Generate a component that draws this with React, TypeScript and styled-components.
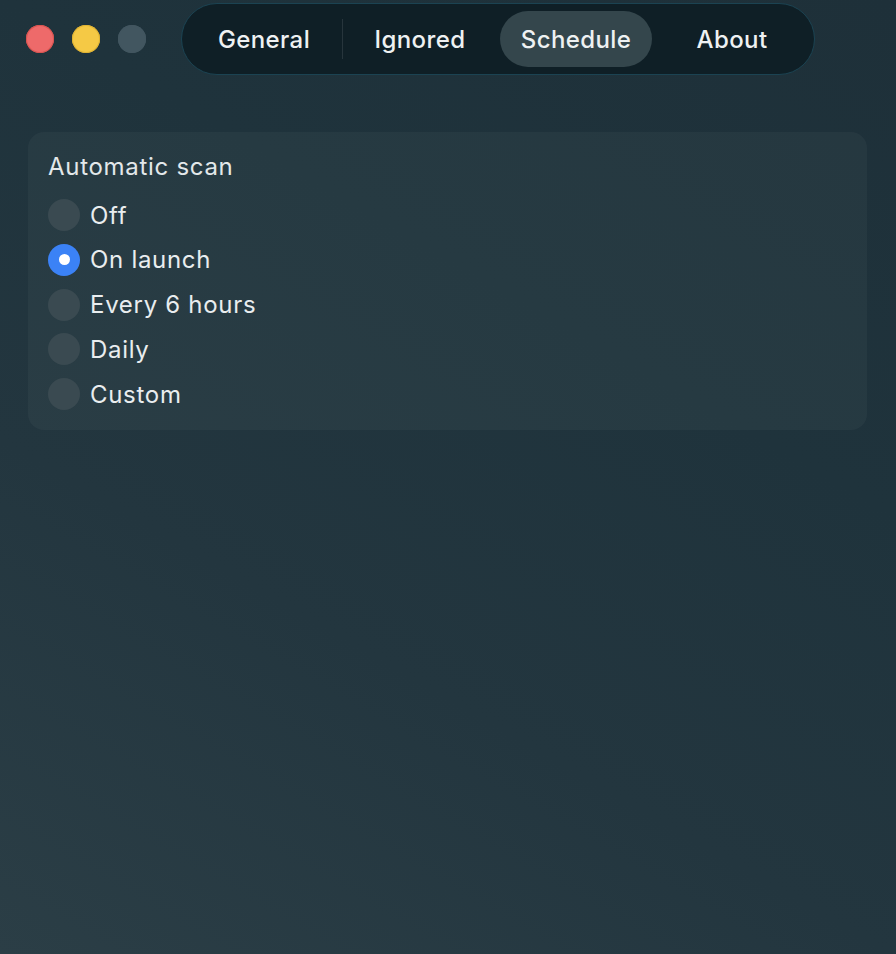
import React from "react";
import styled, { createGlobalStyle } from "styled-components";

const GlobalStyle = createGlobalStyle`
  html, body {
    margin: 0;
    padding: 0;
  }
  body {
    font-family: Inter, "Noto Sans", "Liberation Sans", sans-serif;
    -webkit-font-smoothing: antialiased;
  }
`;

const Window = styled.div`
  width: 896px;
  height: 954px;
  box-sizing: border-box;
  background: linear-gradient(30deg, #2b3e46 0%, #23363f 35%, #1f333c 65%, #1e3039 100%);
  display: flex;
  flex-direction: column;
  overflow: hidden;
`;

const TitleBar = styled.div`
  display: flex;
  align-items: center;
  padding: 3px 0 0 26px;
`;

const Lights = styled.div`
  display: flex;
  gap: 18px;
  margin-right: 35px;
`;

const Light = styled.span<{ $color: string; $edge: string }>`
  width: 28px;
  height: 28px;
  border-radius: 50%;
  background: ${(p) => p.$color};
  box-shadow: inset 0 0 0 1px ${(p) => p.$edge};
`;

const TabBar = styled.nav`
  display: flex;
  align-items: center;
  gap: 4px;
  padding: 6px;
  height: 58px;
  border-radius: 36px;
  background: #0f1f26;
  border: 1px solid #1b4352;
`;

const Tab = styled.div<{ $active?: boolean; $divider?: boolean }>`
  position: relative;
  width: 152px;
  height: 56px;
  border-radius: 28px;
  display: flex;
  align-items: center;
  justify-content: center;
  font-size: 24px;
  font-weight: 500;
  letter-spacing: 0.4px;
  color: #eef1f2;
  background: ${(p) => (p.$active ? "#34464c" : "transparent")};

  &::after {
    content: "";
    display: ${(p) => (p.$divider ? "block" : "none")};
    position: absolute;
    right: -3px;
    top: 8px;
    width: 1px;
    height: 40px;
    background: rgba(255, 255, 255, 0.1);
  }
`;

const Card = styled.section`
  margin: 57px 29px 0 28px;
  padding: 20px 20px 20px;
  border-radius: 16px;
  background: rgba(255, 255, 255, 0.035);
  display: flex;
  flex-direction: column;
`;

const CardTitle = styled.div`
  font-size: 24px;
  line-height: 30px;
  letter-spacing: 0.7px;
  color: #e3e8ea;
  margin-bottom: 17px;
`;

const Options = styled.div`
  display: flex;
  flex-direction: column;
  gap: 12.8px;
`;

const Option = styled.label`
  display: flex;
  align-items: center;
  gap: 10px;
  height: 32px;
  font-size: 24px;
  letter-spacing: 0.7px;
  color: #e9edef;
`;

const Radio = styled.span<{ $checked?: boolean }>`
  width: 32px;
  height: 32px;
  border-radius: 50%;
  background: ${(p) => (p.$checked ? "#3b82f6" : "#3a4a51")};
  display: flex;
  align-items: center;
  justify-content: center;

  &::before {
    content: "";
    display: ${(p) => (p.$checked ? "block" : "none")};
    width: 11px;
    height: 11px;
    border-radius: 50%;
    background: #ffffff;
  }
`;

const tabs = ["General", "Ignored", "Schedule", "About"];
const options = ["Off", "On launch", "Every 6 hours", "Daily", "Custom"];

export default function App() {
  const active = "Schedule";
  const selected = "On launch";
  return (
    <Window>
      <GlobalStyle />
      <TitleBar>
        <Lights>
          <Light $color="#ee6a6a" $edge="#d9534f" />
          <Light $color="#f5c945" $edge="#dfb232" />
          <Light $color="#425660" $edge="#425660" />
        </Lights>
        <TabBar>
          {tabs.map((t, i) => (
            <Tab key={t} $active={t === active} $divider={i === 0}>
              {t}
            </Tab>
          ))}
        </TabBar>
      </TitleBar>
      <Card>
        <CardTitle>Automatic scan</CardTitle>
        <Options>
          {options.map((o) => (
            <Option key={o}>
              <Radio $checked={o === selected} />
              {o}
            </Option>
          ))}
        </Options>
      </Card>
    </Window>
  );
}
